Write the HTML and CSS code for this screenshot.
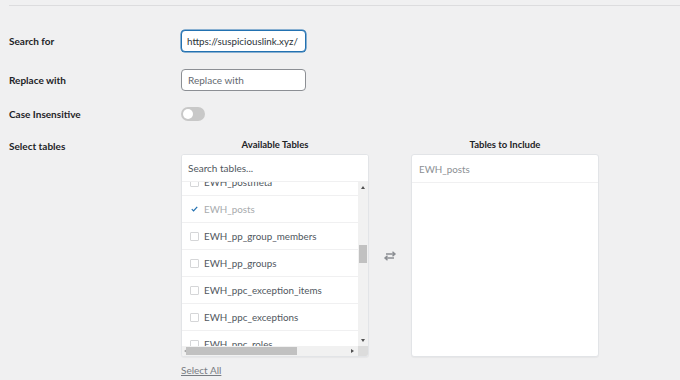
FILE: index.html
```html
<!DOCTYPE html>
<html>
<head lang="en">
  <meta charset="UTF-8">
  <title>Search Replace</title>
  <link rel="stylesheet" href="styles.css">
</head>
<body>
  <div class="page">
    <div class="rule"></div>

    <div class="field field-search">
      <label class="label">Search for</label>
      <input class="text-input focused" type="text" value="https://suspiciouslink.xyz/">
    </div>

    <div class="field field-replace">
      <label class="label">Replace with</label>
      <input class="text-input" type="text" placeholder="Replace with">
    </div>

    <div class="field field-toggle">
      <label class="label">Case Insensitive</label>
      <span class="toggle"><i class="knob"></i></span>
    </div>

    <div class="field field-tables">
      <label class="label">Select tables</label>
      <div class="dual">
        <div class="col">
          <div class="col-title">Available Tables</div>
          <div class="box">
            <div class="box-search">
              <input type="text" placeholder="Search tables...">
            </div>
            <div class="scroller">
              <div class="viewport">
                <ul class="list">
                  <li><span class="check"></span>EWH_postmeta</li>
                  <li class="picked"><span class="check on">
                    <svg width="9" height="8" viewBox="0 0 9 8"><path d="M1 4.2 L3.3 6.4 L8 1.2" fill="none" stroke="#2271b1" stroke-width="1.6"/></svg>
                  </span>EWH_posts</li>
                  <li><span class="check"></span>EWH_pp_group_members</li>
                  <li><span class="check"></span>EWH_pp_groups</li>
                  <li><span class="check"></span>EWH_ppc_exception_items</li>
                  <li><span class="check"></span>EWH_ppc_exceptions</li>
                  <li><span class="check"></span>EWH_ppc_roles</li>
                </ul>
                <div class="vbar">
                  <span class="arrow up"></span>
                  <span class="vthumb"></span>
                  <span class="arrow down"></span>
                </div>
              </div>
              <div class="hbar">
                <span class="arrow left"></span>
                <span class="hthumb"></span>
                <span class="arrow right"></span>
                <span class="corner"></span>
              </div>
            </div>
          </div>
          <a class="select-all" href="#">Select All</a>
        </div>

        <div class="swap">
          <svg width="14" height="10" viewBox="0 0 14 10">
            <path d="M3 3 H12 M9.5 0.8 L12 3 L9.5 5.2" fill="none" stroke="#8c8f94" stroke-width="1.4"/>
            <path d="M11 7 H2 M4.5 4.8 L2 7 L4.5 9.2" fill="none" stroke="#8c8f94" stroke-width="1.4"/>
          </svg>
        </div>

        <div class="col">
          <div class="col-title">Tables to Include</div>
          <div class="box">
            <ul class="list chosen">
              <li>EWH_posts</li>
            </ul>
          </div>
        </div>
      </div>
    </div>
  </div>
</body>
</html>
```

FILE: styles.css
```css
* {
  margin: 0;
  padding: 0;
  box-sizing: border-box;
}
ul {
  list-style: none;
}
body {
  background: #f0f0f1;
  font-family: Lato, "Liberation Sans", sans-serif;
  font-size: 10px;
  color: #1d2327;
}
.page {
  padding: 5px 0 0 9px;
}
.rule {
  border-top: 1px solid #dcdcde;
}

.field {
  display: flex;
  align-items: center;
}
.label {
  width: 172px;
  font-weight: 700;
  font-size: 10px;
  color: #1d2327;
}
.field-search {
  margin-top: 24px;
}
.field-replace {
  margin-top: 17px;
}
.field-toggle {
  margin-top: 16px;
}
.field-tables {
  margin-top: 17px;
  align-items: flex-start;
}
.field-tables .label {
  line-height: 16px;
}

.text-input {
  width: 125px;
  height: 22px;
  padding: 0 1px 0 6px;
  border: 1px solid #8c8f94;
  border-radius: 4px;
  background: #fff;
  font-family: inherit;
  font-size: 10px;
  color: #2c3338;
  outline: none;
}
.text-input.focused {
  padding-left: 5px;
  font-size: 9.8px;
  border-color: #2271b1;
  box-shadow: 0 0 0 0.5px #2271b1;
}
.text-input::placeholder {
  color: #646970;
}

.toggle {
  display: inline-block;
  width: 24px;
  height: 14px;
  border-radius: 7px;
  background: #c8c8c8;
  position: relative;
}
.toggle .knob {
  position: absolute;
  left: 2px;
  top: 2px;
  width: 10px;
  height: 10px;
  border-radius: 50%;
  background: #fff;
}

.dual {
  display: flex;
  align-items: flex-start;
}
.col {
  width: 188px;
}
.col-title {
  text-align: center;
  font-weight: 700;
  font-size: 9.5px;
  line-height: 14px;
  margin-bottom: 2px;
}
.box {
  height: 203px;
  background: #fff;
  border: 1px solid #e2e4e7;
  border-radius: 3px;
  box-shadow: 0 1px 1px rgba(0, 0, 0, 0.04);
  overflow: hidden;
}
.box-search {
  height: 27px;
  border-bottom: 1px solid #f0f0f1;
}
.box-search input {
  width: 100%;
  height: 26px;
  border: 0;
  padding: 0 6px;
  font-family: inherit;
  font-size: 10px;
  outline: none;
}
.box-search input::placeholder {
  color: #50575e;
}

.scroller {
  height: 174px;
  display: flex;
  flex-direction: column;
}
.viewport {
  flex: 1;
  display: flex;
  overflow: hidden;
}
.list {
  flex: 1;
  margin-top: -13px;
}
.list li {
  display: flex;
  align-items: center;
  height: 27px;
  padding-left: 8px;
  border-bottom: 1px solid #f0f0f1;
  font-size: 9.8px;
  color: #50575e;
  white-space: nowrap;
}
.list li.picked {
  color: #a7aaad;
}
.check {
  display: inline-flex;
  align-items: center;
  justify-content: center;
  width: 9px;
  height: 9px;
  margin-right: 5px;
  border: 1px solid #d5d6d8;
  border-radius: 1px;
  background: #fff;
}
.check.on {
  border-color: transparent;
}

.list.chosen {
  margin-top: 0;
}
.list.chosen li {
  padding-left: 7px;
  height: 28px;
  color: #8c8f94;
}

.vbar {
  width: 10px;
  background: #f1f1f1;
  position: relative;
}
.vthumb {
  position: absolute;
  left: 1px;
  top: 63px;
  width: 8px;
  height: 18px;
  background: #c1c1c1;
}
.hbar {
  height: 10px;
  background: #f1f1f1;
  position: relative;
}
.hthumb {
  position: absolute;
  left: 4px;
  top: 1px;
  width: 111px;
  height: 8px;
  background: #c1c1c1;
}
.corner {
  position: absolute;
  right: 0;
  top: 0;
  width: 10px;
  height: 10px;
  background: #dcdcdc;
}
.arrow {
  position: absolute;
  width: 0;
  height: 0;
  border: 2px solid transparent;
}
.arrow.up {
  top: 2px;
  left: 3px;
  border-bottom: 3px solid #505050;
}
.arrow.down {
  bottom: 2px;
  left: 3px;
  border-top: 3px solid #505050;
}
.arrow.left {
  left: 0;
  top: 3px;
  border-right: 3px solid #a3a3a3;
}
.arrow.right {
  right: 12px;
  top: 3px;
  border-left: 3px solid #505050;
}

.swap {
  width: 42px;
  height: 203px;
  margin-top: 16px;
  display: flex;
  align-items: center;
  justify-content: center;
}

.select-all {
  display: inline-block;
  margin-top: 7px;
  font-size: 10px;
  color: #787c82;
  text-decoration: underline;
}
```
